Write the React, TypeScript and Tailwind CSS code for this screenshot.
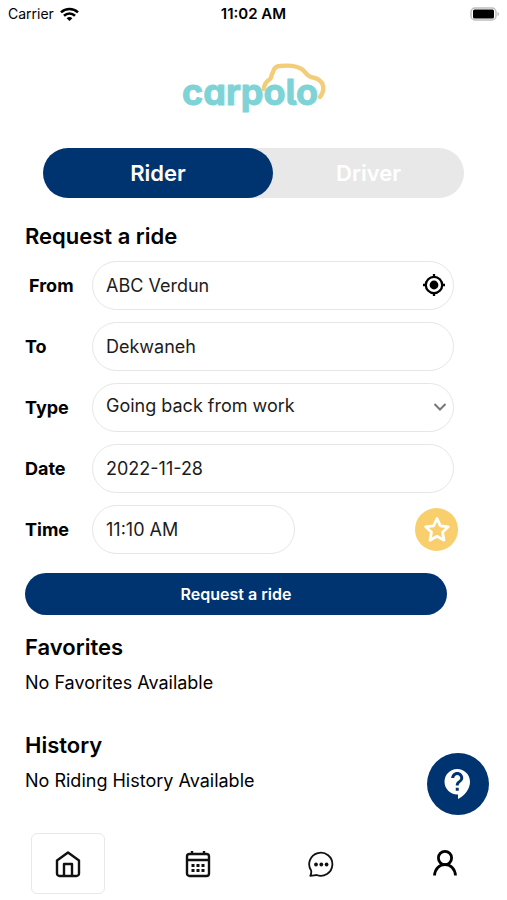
import React, { useState } from 'react'
import type { ReactNode } from 'react'
import { MdContactSupport } from 'react-icons/md'

const rides = ['Going back from work', 'Going to work']

const fieldClass =
  'h-[49px] w-full rounded-full border border-[#e6e6e6] bg-white px-[13px] text-lg text-[#1c1c1c] outline-none'

const Logo = () => (
  <svg width="146" height="52" viewBox="0 0 146 52" role="img" aria-label="carpolo">
    <path
      d="M83 27c0-5 3-8 6-10 2-2 1-4 3-7 1-4 3-6 7-6 9-1 18 0 23 4 3 3 4 6 8 7 6 1 11 3 12 9 1 4 0 7-3 11"
      fill="none"
      stroke="#f3cd78"
      strokeWidth="4.4"
      strokeLinecap="round"
    />
    <text
      x="1"
      y="43"
      fontSize="36"
      stroke="#7ed3d6"
      strokeWidth="1"
      strokeLinejoin="round"
      className="fill-[#7ed3d6] font-['Inter',sans-serif] font-bold [font-feature-settings:'cv11','cv05']"
    >
      carpolo
    </text>
  </svg>
)

const WifiIcon = () => (
  <svg width="19" height="15" viewBox="0 0 19 15" fill="none" stroke="#000" strokeWidth="2.6" aria-hidden="true">
    <path d="M1 5.4C5.8.9 13.2.9 18 5.4" />
    <path d="M4 8.8c3.2-3 7.8-3 11 0" />
    <path d="M9.5 14 6.6 11.2c1.7-1.5 4.1-1.5 5.8 0z" fill="#000" stroke="none" />
  </svg>
)

const BatteryIcon = () => (
  <svg width="30" height="15" viewBox="0 0 30 15" aria-hidden="true">
    <rect x="2" y="1" width="25" height="12" rx="4" fill="#fff" stroke="#bdbdbd" strokeWidth="1.5" />
    <rect x="4" y="2.5" width="21" height="9" rx="1.5" fill="#000" />
    <path d="M28.5 5c2 .5 2 3.5 0 4z" fill="#bdbdbd" />
  </svg>
)

const LocateIcon = () => (
  <svg width="24" height="24" viewBox="0 0 24 24" fill="none" stroke="#000" strokeWidth="2.3" aria-hidden="true">
    <circle cx="12" cy="12" r="8.2" />
    <circle cx="12" cy="12" r="4.4" fill="#000" stroke="none" />
    <path d="M12 1v3M12 20v3M1 12h3M20 12h3" />
  </svg>
)

const StarIcon = () => (
  <svg width="28" height="28" viewBox="0 0 28 28" fill="none" stroke="#fff" strokeWidth="2.8" strokeLinejoin="round" aria-hidden="true">
    <path d="M14 2.5l3.4 7.3 7.9 1-5.8 5.5 1.5 7.9L14 20.3l-7 3.900 1.5-7.9-5.8-5.5 7.9-1z" />
  </svg>
)

const HomeIcon = () => (
  <svg width="26" height="28" viewBox="0 0 26 28" fill="none" stroke="#111" strokeWidth="2.4" strokeLinejoin="round" aria-hidden="true">
    <path d="M13 2.5 2 10.5v13A2.5 2.5 0 0 0 4.5 26h17a2.5 2.5 0 0 0 2.5-2.5v-13z" />
    <path d="M9 26V14h8v12" />
  </svg>
)

const CalendarIcon = () => (
  <svg width="26" height="28" viewBox="0 0 26 28" fill="none" stroke="#111" strokeWidth="2.4" aria-hidden="true">
    <rect x="2" y="4" width="22" height="22" rx="2.5" />
    <path d="M2 10h22M7 1v4M19 1v4" />
    <path d="M6.5 15.5h3M11.5 15.5h3M16.5 15.5h3M6.5 20.5h3M11.5 20.5h3M16.5 20.5h3" strokeWidth="3" />
  </svg>
)

const ChatIcon = () => (
  <svg width="26" height="28" viewBox="0 0 26 28" fill="none" stroke="#111" strokeWidth="1.8" strokeLinejoin="round" aria-hidden="true">
    <path d="M2.3 25.8c.8-1.8 1.3-3.6.8-5.2A11.6 11.6 0 1 1 8.5 25c-2 .2-4 .8-6.2.8z" />
    <g fill="#111" stroke="none">
      <circle cx="8" cy="14.5" r="1.9" />
      <circle cx="13.3" cy="14.5" r="1.9" />
      <circle cx="18.6" cy="14.5" r="1.9" />
    </g>
  </svg>
)

const ProfileIcon = () => (
  <svg width="26" height="28" viewBox="0 0 26 28" fill="none" stroke="#000" strokeWidth="2.8" aria-hidden="true">
    <circle cx="13" cy="8" r="6.6" />
    <path d="M2.5 25.5C3 18.5 7.5 14.6 13 14.6s10 3.9 10.5 10.9" />
  </svg>
)

const tabs = [
  { name: 'Home', icon: <HomeIcon /> },
  { name: 'Calendar', icon: <CalendarIcon /> },
  { name: 'Messages', icon: <ChatIcon /> },
  { name: 'Profile', icon: <ProfileIcon /> },
]

type RowProps = {
  id: string
  label: string
  labelClass?: string
  children: ReactNode
}

const Row = ({ id, label, labelClass = '', children }: RowProps) => (
  <div className="flex items-center pr-1">
    <label htmlFor={id} className={`w-[67px] shrink-0 text-lg font-bold ${labelClass}`}>
      {label}
    </label>
    {children}
  </div>
)

const App = () => {
  const [mode, setMode] = useState('rider')
  const [tab, setTab] = useState('Home')

  return (
    <div className="flex min-h-screen flex-col bg-white font-['Inter','Liberation_Sans',sans-serif] text-black">
      <header className="grid grid-cols-3 items-center px-2 pt-1 text-sm">
        <div className="flex items-center gap-1.5">
          Carrier <WifiIcon />
        </div>
        <div className="text-center text-[15px] leading-5 font-semibold">11:02 AM</div>
        <div className="flex justify-end">
          <BatteryIcon />
        </div>
      </header>

      <div className="mt-[38px] flex justify-center">
        <Logo />
      </div>

      <div className="mx-[43px] mt-[34px] flex h-[50px] rounded-full bg-[#e8e8e8] text-[22px] font-semibold text-white">
        <button
          type="button"
          onClick={() => setMode('rider')}
          className={`w-[230px] rounded-full ${mode === 'rider' ? 'bg-[#003471]' : ''}`}
        >
          Rider
        </button>
        <button
          type="button"
          onClick={() => setMode('driver')}
          className={`flex-1 rounded-full ${mode === 'driver' ? 'bg-[#003471]' : ''}`}
        >
          Driver
        </button>
      </div>

      <main className="flex-1 pl-[25px] pr-[49px]">
        <h1 className="mt-6 text-[22px] leading-7 font-semibold">Request a ride</h1>

        <form className="mt-[11px] flex flex-col gap-3" onSubmit={(e) => e.preventDefault()}>
          <Row id="from" label="From" labelClass="pl-1">
            <div className="relative flex-1">
              <input id="from" type="text" defaultValue="ABC Verdun" className={fieldClass} />
              <button type="button" aria-label="Use my location" className="absolute top-3 right-2">
                <LocateIcon />
              </button>
            </div>
          </Row>
          <Row id="to" label="To">
            <input id="to" type="text" defaultValue="Dekwaneh" className={fieldClass} />
          </Row>
          <Row id="type" label="Type">
            <div className="relative flex-1">
              <select id="type" className={`${fieldClass} appearance-none pb-1`}>
                {rides.map((ride) => (
                  <option key={ride}>{ride}</option>
                ))}
              </select>
              <svg
                width="14"
                height="10"
                viewBox="0 0 14 10"
                fill="none"
                stroke="#777"
                strokeWidth="2"
                className="pointer-events-none absolute top-5 right-[7px]"
                aria-hidden="true"
              >
                <path d="M1.5 1 7 6.500 12.500 1" />
              </svg>
            </div>
          </Row>
          <Row id="date" label="Date">
            <input id="date" type="text" defaultValue="2022-11-28" className={fieldClass} />
          </Row>
          <div className="flex items-center justify-between">
            <Row id="time" label="Time">
              <input id="time" type="text" defaultValue="11:10 AM" className={`${fieldClass} max-w-[203px]`} />
            </Row>
            <button
              type="button"
              aria-label="Add to favorites"
              className="flex size-[43px] shrink-0 items-center justify-center rounded-full bg-[#f8cf6c]"
            >
              <StarIcon />
            </button>
          </div>
          <button type="submit" className="mt-[7px] mr-[11px] h-[42px] rounded-full bg-[#003471] text-base font-semibold text-white">
            Request a ride
          </button>
        </form>

        <h2 className="mt-4 text-[22px] leading-8 font-semibold">Favorites</h2>
        <p className="mt-1.5 text-lg">No Favorites Available</p>

        <h2 className="mt-8 text-[22px] leading-8 font-semibold">History</h2>
        <p className="mt-1.5 text-lg">No Riding History Available</p>
      </main>

      <button
        type="button"
        aria-label="Help"
        className="fixed right-[18px] bottom-[85px] flex size-[62px] items-center justify-center rounded-full bg-[#003471] text-white"
      >
        <MdContactSupport size={36} />
      </button>

      <nav className="flex justify-between pr-[25px] pb-1.5 pl-[31px]">
        {tabs.map((item) => (
          <button
            key={item.name}
            type="button"
            aria-label={item.name}
            onClick={() => setTab(item.name)}
            className={`flex h-[61px] w-[74px] items-center justify-center rounded-md border first:mr-1.5 ${
              tab === item.name ? 'border-[#e8e8e8]' : 'border-transparent'
            }`}
          >
            {item.icon}
          </button>
        ))}
      </nav>
    </div>
  )
}

export default App
